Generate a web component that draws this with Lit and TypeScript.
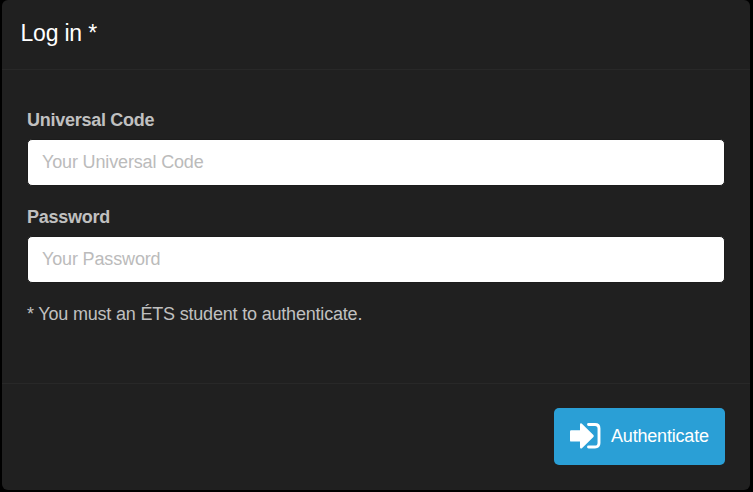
import { LitElement, html, css } from "lit";
import { customElement, property } from "lit/decorators.js";

@customElement("form-field")
class FormField extends LitElement {
  @property() label = "";
  @property() hint = "";
  @property() type = "text";

  static styles = css`
    :host { display: block; height: 97px; }
    label {
      display: block; height: 26px; line-height: 26px; font-weight: bold;
      letter-spacing: -0.27px; color: #c0c0c0;
    }
    input {
      box-sizing: border-box; display: block; width: 698px; height: 47px; margin: 6px 0 0;
      padding: 0 14px; border: 1px solid #1c1c1c; border-radius: 5px; outline: none;
      background: #fff; color: #333; font: inherit; letter-spacing: -0.15px;
    }
    input::placeholder { color: #bbb; opacity: 1; }
  `;

  render() {
    return html`<label for="f">${this.label}</label>
      <input id="f" type=${this.type} placeholder=${this.hint} />`;
  }
}

@customElement("app-root")
class AppRoot extends LitElement {
  static styles = css`
    :host {
      display: block; box-sizing: border-box; width: 753px; height: 492px; padding: 0 3px 2px 2px;
      overflow: hidden; background: #000; color: #c0c0c0;
      font: 18px "Liberation Sans", Arial, sans-serif;
    }
    .panel {
      display: flex; flex-direction: column; width: 748px; height: 490px;
      background: #202020; border-radius: 6px;
    }
    header {
      box-sizing: border-box; height: 70px; padding: 19px 18.5px 0; border-bottom: 1px solid #282828;
    }
    h1 {
      margin: 0; font-size: 23px; line-height: 28px; font-weight: normal;
      letter-spacing: -0.2px; color: #fff;
    }
    main { flex: 1; padding: 37px 25px 0; }
    p { margin: 0; line-height: 26px; letter-spacing: -0.19px; }
    footer {
      box-sizing: border-box; height: 107px; padding: 24px 25px 0; border-top: 1px solid #282828;
      display: flex; justify-content: flex-end;
    }
    button {
      display: flex; align-items: center; box-sizing: border-box; width: 171px; height: 57px;
      padding: 0 0 0 16px; border: 0; border-radius: 5px; background: #2a9fd6; color: #fff;
      font: inherit; letter-spacing: -0.19px; gap: 10px; white-space: nowrap;
    }
    svg { display: block; flex: none; }
  `;

  render() {
    return html`
      <div class="panel">
        <header><h1>Log in *</h1></header>
        <main>
          <form-field label="Universal Code" hint="Your Universal Code"></form-field>
          <form-field label="Password" hint="Your Password" type="password"></form-field>
          <p>* You must an ÉTS student to authenticate.</p>
        </main>
        <footer>
          <button type="button">
            <svg width="31" height="27" viewBox="0 0 31 27" fill="#fff">
              <path d="M1.2 7.2H10V1.500Q10 0.300 11 0.300Q11.600 0.300 12.200 0.900L23.400 11.900Q24.300 12.900 23.400 13.900L12.200 24.900Q11.600 25.500 11 25.500Q10 25.500 10 24.300V18.600H1.200Q0 18.600 0 17.400V8.400Q0 7.200 1.200 7.200Z" />
              <path d="M18.500 1.500H25Q29 1.500 29 5.500V20Q29 24 25 24H18.500" fill="none" stroke="#fff" stroke-width="2.900" stroke-linecap="round" />
            </svg>
            <span>Authenticate</span>
          </button>
        </footer>
      </div>
    `;
  }
}
